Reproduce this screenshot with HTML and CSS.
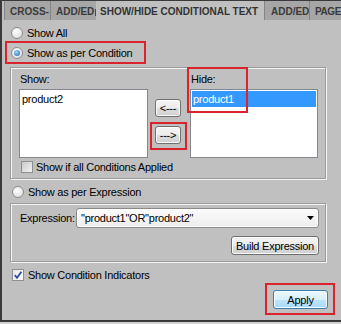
FILE: index.html
```html
<!DOCTYPE html>
<html lang="en">

<head>
    <meta charset="UTF-8">
    <title>Show/Hide Conditional Text</title>
    <link rel="stylesheet" href="styles.css">
</head>

<body>

    <div class="window">
        <div class="tabs">
            <div class="tab tab-1 clipped">CROSS-</div>
            <div class="tab tab-2 clipped">ADD/ED</div>
            <div class="tab active">SHOW/HIDE CONDITIONAL TEXT</div>
            <div class="tab tab-4 clipped">ADD/ED</div>
            <div class="tab tab-5">PAGE</div>
        </div>

        <div class="panel">
            <label class="option opt-all"><span class="radio"></span>Show All</label>

            <div class="mark mark-cond">
                <label class="option"><span class="radio on"></span>Show as per Condition</label>
            </div>

            <div class="group group-cond">
                <div class="lists">
                    <div class="list-col">
                        <div class="list-label">Show:</div>
                        <div class="listbox">
                            <div class="item">product2</div>
                        </div>
                    </div>

                    <div class="move">
                        <button class="btn btn-move btn-left">&lt;---</button>
                        <div class="mark mark-move">
                            <button class="btn btn-move">---&gt;</button>
                        </div>
                    </div>

                    <div class="list-col hide-col">
                        <div class="list-label">Hide:</div>
                        <div class="listbox">
                            <div class="item selected">product1</div>
                        </div>
                        <div class="mark mark-hide"></div>
                    </div>
                </div>

                <label class="option check-row"><span class="check"></span>Show if all Conditions Applied</label>
            </div>

            <label class="option opt-expr"><span class="radio"></span>Show as per Expression</label>

            <div class="group group-expr">
                <div class="expr-row">
                    <span class="expr-label">Expression:</span>
                    <div class="combo">
                        <span>"product1"OR"product2"</span>
                        <svg width="7" height="4" viewBox="0 0 7 4"><path d="M0 0 H7 L3.5 4 Z" fill="#000" /></svg>
                    </div>
                </div>
                <div class="expr-actions">
                    <button class="btn btn-build">Build Expression</button>
                </div>
            </div>

            <label class="option opt-ind">
                <span class="check on">
                    <svg width="10" height="10" viewBox="0 0 10 10">
                        <path d="M1.8 5.2 L4 7.8 L8.4 1.8" fill="none" stroke="#2a4f9c" stroke-width="1.8" />
                    </svg>
                </span>Show Condition Indicators
            </label>

            <div class="footer">
                <div class="mark mark-apply">
                    <button class="btn btn-apply">Apply</button>
                </div>
            </div>
        </div>
    </div>

</body>

</html>
```

FILE: styles.css
```css
body {
    margin: 0;
    background-color: #d4d4d4;
    font-family: "Liberation Sans", Arial, sans-serif;
    font-size: 11px;
    letter-spacing: -0.25px;
    color: #000;
}

.window {
    width: 339px;
    height: 319px;
    border-top: 1px solid #3a3a3a;
    border-left: 2px solid #3a3a3a;
    border-bottom: 2px solid #3a3a3a;
    background-color: #c0c0c0;
    display: flex;
    flex-direction: column;
}

/* tab strip */
.tabs {
    display: flex;
    height: 19px;
    padding-left: 2px;
}

.tab {
    box-sizing: border-box;
    height: 19px;
    padding: 2px 0 0 5px;
    line-height: 17px;
    white-space: nowrap;
    background-color: #a6a6a6;
    border-left: 1px solid #858585;
    color: #3a3a3a;
    font-size: 10px;
    font-weight: bold;
    letter-spacing: 0;
    display: flex;
    align-items: center;
}

/* stem of the next letter, cut by the tab edge */
.tab.clipped::after {
    content: "";
    width: 1px;
    height: 7px;
    margin: 1px 0 0 1px;
    background-color: #4a4a4a;
}

.tab-1 {
    width: 46px;
}

.tab-2 {
    width: 46px;
}

.tab.active {
    width: 169px;
    padding-left: 4px;
    background-color: #c0c0c0;
    border-left: none;
    color: #333;
}

.tab-4 {
    width: 45px;
    padding-left: 6px;
}

.tab-5 {
    flex: 1;
    padding-left: 5px;
    letter-spacing: -0.4px;
}

/* panel */
.panel {
    flex: 1;
    padding-left: 3px;
    display: flex;
    flex-direction: column;
    align-items: flex-start;
}

.option {
    display: flex;
    align-items: center;
    gap: 4px;
    height: 16px;
    white-space: nowrap;
}

.opt-all {
    margin: 5px 0 0 6px;
}

.opt-expr {
    margin: 5px 0 0 7px;
}

.opt-ind {
    margin: 6px 0 0 7px;
    height: 14px;
}

.radio {
    box-sizing: border-box;
    width: 12px;
    height: 12px;
    border-radius: 50%;
    border: 1px solid #8d8d8d;
    background: radial-gradient(circle at 40% 35%, #ffffff, #d6d6d6);
    display: flex;
    align-items: center;
    justify-content: center;
}

.radio.on::after {
    content: "";
    width: 6px;
    height: 6px;
    border-radius: 50%;
    background: radial-gradient(circle at 40% 35%, #9bd8ff, #1c5fa5);
}

.check {
    box-sizing: border-box;
    width: 12px;
    height: 12px;
    border: 1px solid #8e8f8f;
    background: linear-gradient(135deg, #c9c9c9, #f2f2f2);
    display: flex;
    align-items: center;
    justify-content: center;
}

.check.on {
    background: linear-gradient(135deg, #e6e6e6, #ffffff);
}

/* red annotation boxes */
.mark {
    box-sizing: border-box;
    border: 2px solid #d9232d;
}

.mark-cond {
    width: 141px;
    height: 23px;
    padding-left: 4px;
    display: flex;
    align-items: center;
}

/* group boxes */
.group {
    box-sizing: border-box;
    width: 316px;
    margin-left: 5px;
    border: 1px solid #9c9c9c;
    box-shadow: inset 1px 1px 0 #f4f4f4, 1px 1px 0 #f4f4f4;
}

.group-cond {
    margin-top: 3px;
    padding: 4px 6px 4px 8px;
}

.lists {
    display: flex;
}

.list-col {
    display: flex;
    flex-direction: column;
}

.hide-col {
    position: relative;
    margin-left: 3px;
}

.list-label {
    height: 14px;
    line-height: 14px;
    margin: 0 0 3px 1px;
}

.listbox {
    box-sizing: border-box;
    width: 129px;
    height: 69px;
    padding: 1px;
    border: 1px solid #828790;
    background-color: #fff;
}

.hide-col .listbox {
    width: 128px;
}

.item {
    height: 16px;
    line-height: 16px;
    padding-left: 1px;
}

.item.selected {
    background-color: #3399ff;
    color: #fff;
}

.mark-hide {
    position: absolute;
    left: -3px;
    top: -5px;
    width: 61px;
    height: 46px;
}

.move {
    width: 37px;
    margin-left: 2px;
    display: flex;
    flex-direction: column;
    align-items: flex-start;
}

.btn {
    box-sizing: border-box;
    font-family: "Liberation Sans", Arial, sans-serif;
    font-size: 11px;
    letter-spacing: -0.25px;
    color: #000;
    padding: 0;
    border: 1px solid #707070;
    border-radius: 3px;
    background: linear-gradient(#f4f4f4 0%, #ececec 50%, #dedede 51%, #d0d0d0 100%);
    box-shadow: inset 0 0 0 1px #fbfbfb;
}

.btn-move {
    width: 26px;
    height: 18px;
}

.btn-left {
    margin: 27px 0 0 5px;
}

.mark-move {
    margin-top: 5px;
    padding: 2px 4px 4px 3px;
}

.check-row {
    margin: 2px 0 0 2px;
    height: 14px;
    gap: 3px;
}

.group-expr {
    margin-top: 3px;
    padding: 4px 6px 6px 9px;
}

.expr-row {
    display: flex;
    align-items: center;
}

.expr-label {
    width: 56px;
}

.combo {
    box-sizing: border-box;
    flex: 1;
    height: 20px;
    padding: 0 4px 0 4px;
    border: 1px solid #8a8a8a;
    border-radius: 3px;
    background: linear-gradient(#fdfdfd, #ececec);
    box-shadow: inset 0 0 0 1px #ffffff;
    display: flex;
    align-items: center;
    justify-content: space-between;
}

.expr-actions {
    display: flex;
    justify-content: flex-end;
    margin-top: 8px;
}

.btn-build {
    width: 88px;
    height: 19px;
}

.footer {
    align-self: stretch;
    display: flex;
    justify-content: flex-end;
    padding-right: 6px;
    margin-top: 1px;
}

.mark-apply {
    width: 70px;
    height: 32px;
    padding: 5px 5px 4px 6px;
}

.btn-apply {
    width: 55px;
    height: 19px;
    border-color: #3c7fb1;
    background: linear-gradient(#eaf6fd 0%, #d9f0fc 50%, #bee6fd 51%, #a7d9f5 100%);
    box-shadow: inset 0 0 0 1px #f4fbff;
}
```
